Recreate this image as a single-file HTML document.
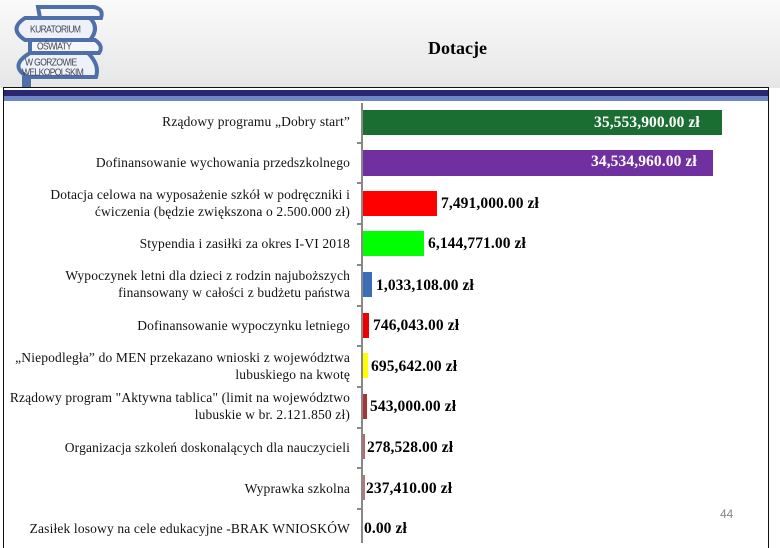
<html><head><style>
body{margin:0;width:780px;height:540px;overflow:hidden;background:#fff;font-family:"Liberation Serif",serif;position:relative}
.hdr{position:absolute;left:0;top:0;width:780px;height:88px;background:linear-gradient(#fafafa,#e6e6e6)}
.box{position:absolute;left:3px;top:87px;width:764px;height:460px;border:1.5px solid #111;border-bottom:none;background:#fff}
.b1{position:absolute;left:4px;top:90px;width:764px;height:6px;background:#2a2670}
.b2{position:absolute;left:4px;top:96px;width:764px;height:5px;background:#6f86c6}
.title{position:absolute;left:428px;top:38px;font-weight:bold;font-size:18px}
.lab{position:absolute;right:430px;width:310px;text-align:right;font-size:13.5px;line-height:17px;color:#111;letter-spacing:0.15px}
.bar{position:absolute;left:363px}
.val{position:absolute;font-weight:bold;font-size:15.5px;color:#000;letter-spacing:0.1px}
.axis{position:absolute;left:361px;top:103px;width:2px;height:440px;background:#888}
.tick{position:absolute;left:357px;width:5px;height:2px;background:#888}
.logo{position:absolute;font-family:"Liberation Sans",sans-serif;font-size:8.5px;color:#445;letter-spacing:-0.6px;transform:scaleY(1.15)}
</style></head><body>
<div class="hdr"></div>
<svg style="position:absolute;left:0;top:0" width="110" height="95">
<path d="M38 7 H94 Q104 9 101 18 H40 Z" fill="#f4f6fa" stroke="#4f6fa8" stroke-width="4"/>
<path d="M25 18 H90 Q100 28 90 40 H25 Q8 29 25 18 Z" fill="#eef1f7" stroke="#4f6fa8" stroke-width="4"/>
<path d="M30 40 H95 Q104 46 99 53 H30 Z" fill="#f4f6fa" stroke="#4f6fa8" stroke-width="4"/>
<path d="M30 53 H88 Q100 65 96 77 H28 Q8 66 30 53 Z" fill="#eef1f7" stroke="#4f6fa8" stroke-width="4"/>
<rect x="22" y="76" width="9" height="12" fill="#4f6fa8"/>
</svg>
<div class="logo" style="left:30px;top:24px">KURATORIUM</div>
<div class="logo" style="left:37px;top:41px">OŚWIATY</div>
<div class="logo" style="left:25px;top:57px">W GORZOWIE</div>
<div class="logo" style="left:22px;top:67px">WELKOPOLSKIM</div>
<div class="title">Dotacje</div>
<div class="box"></div><div class="b1"></div><div class="b2"></div>
<div class="axis"></div>
<div class="tick" style="top:142px"></div><div class="tick" style="top:182px"></div><div class="tick" style="top:223px"></div><div class="tick" style="top:264px"></div><div class="tick" style="top:305px"></div><div class="tick" style="top:345px"></div><div class="tick" style="top:386px"></div><div class="tick" style="top:427px"></div><div class="tick" style="top:467px"></div><div class="tick" style="top:508px"></div>

<div class="lab" style="top:113px">Rządowy programu „Dobry start”</div>
<div class="lab" style="top:154px">Dofinansowanie wychowania przedszkolnego</div>
<div class="lab" style="top:186px">Dotacja celowa na wyposażenie szkół w podręczniki i ćwiczenia (będzie zwiększona o 2.500.000 zł)</div>
<div class="lab" style="top:235px">Stypendia i zasiłki za okres I-VI 2018</div>
<div class="lab" style="top:267px">Wypoczynek letni dla dzieci z rodzin najuboższych finansowany w całości z budżetu państwa</div>
<div class="lab" style="top:317px">Dofinansowanie wypoczynku letniego</div>
<div class="lab" style="top:349px;width:345px">„Niepodległa” do MEN przekazano wnioski z województwa lubuskiego na kwotę</div>
<div class="lab" style="top:389px;width:352px">Rządowy program "Aktywna tablica" (limit na województwo lubuskie w br. 2.121.850 zł)</div>
<div class="lab" style="top:439px">Organizacja szkoleń doskonalących dla nauczycieli</div>
<div class="lab" style="top:480px">Wyprawka szkolna</div>
<div class="lab" style="top:520px;width:360px">Zasiłek losowy na cele edukacyjne -BRAK WNIOSKÓW</div>

<div class="bar" style="top:110px;width:359px;height:25px;background:#1b6e32"></div>
<div class="val" style="left:594px;top:114px;color:#fff">35,553,900.00 zł</div>
<div class="bar" style="top:150px;width:350px;height:26px;background:#7030a0"></div>
<div class="val" style="left:591px;top:153px;color:#fff">34,534,960.00 zł</div>
<div class="bar" style="top:191px;width:74px;height:25px;background:#f00"></div>
<div class="val" style="left:441px;top:195px">7,491,000.00 zł</div>
<div class="bar" style="top:231px;width:61px;height:25px;background:#0f0"></div>
<div class="val" style="left:428px;top:235px">6,144,771.00 zł</div>
<div class="bar" style="top:272px;width:9px;height:25px;background:#3a6fb8"></div>
<div class="val" style="left:376px;top:277px">1,033,108.00 zł</div>
<div class="bar" style="top:313px;width:6px;height:25px;background:#e00"></div>
<div class="val" style="left:373px;top:317px">746,043.00 zł</div>
<div class="bar" style="top:353px;width:5px;height:25px;background:#ff0"></div>
<div class="val" style="left:371px;top:358px">695,642.00 zł</div>
<div class="bar" style="top:394px;width:4px;height:25px;background:#a33"></div>
<div class="val" style="left:370px;top:398px">543,000.00 zł</div>
<div class="bar" style="top:434px;width:2px;height:25px;background:#b66"></div>
<div class="val" style="left:367px;top:439px">278,528.00 zł</div>
<div class="bar" style="top:475px;width:2px;height:25px;background:#b77"></div>
<div class="val" style="left:366px;top:480px">237,410.00 zł</div>
<div class="val" style="left:364px;top:520px">0.00 zł</div>
<div style="position:absolute;left:720px;top:507px;font-size:12px;color:#888;font-family:'Liberation Sans',sans-serif">44</div>
</body></html>
